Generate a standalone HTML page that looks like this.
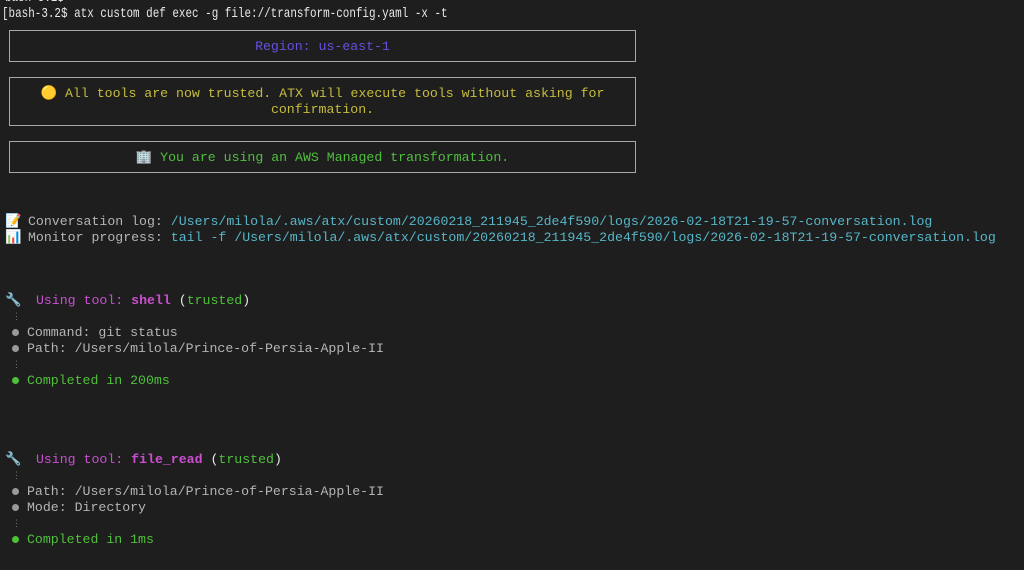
<!DOCTYPE html>
<html><head><meta charset="utf-8"><style>
html,body{margin:0;padding:0;background:#1e1e1e;width:1024px;height:570px;overflow:hidden}
body{position:relative;font-family:"Liberation Mono","DejaVu Sans Mono",monospace;font-size:13.23px;color:#b4b4b4}
.l{position:absolute;left:5px;height:16px;line-height:16px;white-space:pre}
.box{position:absolute;left:9px;width:625px;border:1px solid #a8a8a8;text-align:center;line-height:16px;white-space:pre}
.c{color:#56b6c8}.g{color:#4fc03c}.m{color:#c94fd0}.y{color:#c6bc3c}.w{color:#e8e8e8}
.dot{display:inline-block;width:7px;height:7px;border-radius:50%;background:#9a9a9a;margin:0 8px 1px 7px;vertical-align:middle}
.gd{background:#4fc03c}
.v{color:#777;font-size:9px}
.sq{transform-origin:0 50%;transform:scaleX(0.78);font-size:14px}
.e{display:inline-block;width:23px}
</style></head><body>
<div class="l w sq" style="top:-10px">bash-3.2$</div>
<div class="l w sq" style="top:6px;left:2px">[bash-3.2$ atx custom def exec -g file://transform-config.yaml -x -t</div>
<div class="box" style="top:30px;height:30px;line-height:31px"><span style="color:#6451e0">Region: us-east-1</span></div>
<div class="box y" style="top:77px;height:47px;padding-top:8px;box-sizing:border-box;height:49px;width:627px">🟡 All tools are now trusted. ATX will execute tools without asking for
confirmation.</div>
<div class="box g" style="top:141px;height:30px;line-height:32px">🏢 You are using an AWS Managed transformation.</div>
<div class="l" style="top:214px"><span class="e">📝</span>Conversation log: <span class="c">/Users/milola/.aws/atx/custom/20260218_211945_2de4f590/logs/2026-02-18T21-19-57-conversation.log</span></div>
<div class="l" style="top:230px"><span class="e">📊</span>Monitor progress: <span class="c">tail -f /Users/milola/.aws/atx/custom/20260218_211945_2de4f590/logs/2026-02-18T21-19-57-conversation.log</span></div>
<div class="l w" style="top:293px"><span class="e">🔧</span> <span class="m">Using tool: <b>shell</b></span> (<span class="g">trusted</span>)</div>
<div class="l v" style="top:309px;left:12px">⋮</div>
<div class="l" style="top:325px"><span class="dot"></span>Command: git status</div>
<div class="l" style="top:341px"><span class="dot"></span>Path: /Users/milola/Prince-of-Persia-Apple-II</div>
<div class="l v" style="top:357px;left:12px">⋮</div>
<div class="l g" style="top:373px"><span class="dot gd"></span>Completed in 200ms</div>
<div class="l w" style="top:452px"><span class="e">🔧</span> <span class="m">Using tool: <b>file_read</b></span> (<span class="g">trusted</span>)</div>
<div class="l v" style="top:468px;left:12px">⋮</div>
<div class="l" style="top:484px"><span class="dot"></span>Path: /Users/milola/Prince-of-Persia-Apple-II</div>
<div class="l" style="top:500px"><span class="dot"></span>Mode: Directory</div>
<div class="l v" style="top:516px;left:12px">⋮</div>
<div class="l g" style="top:532px"><span class="dot gd"></span>Completed in 1ms</div>
</body></html>
